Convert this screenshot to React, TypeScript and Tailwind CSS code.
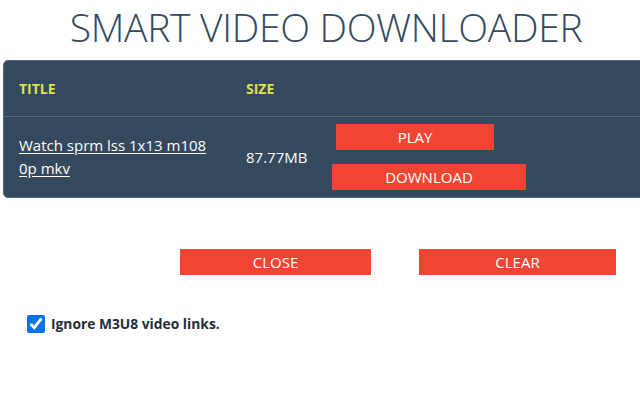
import React from "react";

export default function App() {
  return (
    <div className="w-[640px] h-[400px] bg-white overflow-hidden font-['Open_Sans','Noto_Sans',sans-serif]">
      {/* Header */}
      <h1 className="h-[60px] pl-3 pt-[2px] text-center text-[39px] leading-[50px] font-light tracking-[-0.3px] text-[#34495e]">
        SMART VIDEO DOWNLOADER
      </h1>

      {/* Video table */}
      <div className="ml-[3px] w-[680px] rounded-[5px] border border-[#4b6887] bg-[#34495e]">
        <div className="flex h-[56px] items-center border-b border-[#4b6887] text-[14px] font-bold text-[#dbe24c]">
          <div className="w-[242px] pl-[15px]">TITLE</div>
          <div>SIZE</div>
        </div>
        <div className="flex items-center pt-[7px] pb-[7px] text-white">
          <div className="w-[242px] pl-[15px] text-[15px] leading-[23px]">
            <a href="#" className="underline underline-offset-2">
              Watch sprm lss 1x13 m108
              <br />
              0p mkv
            </a>
          </div>
          <div className="w-[74px] text-[15px]">87.77MB</div>
          <div className="flex flex-col gap-[14px]">
            <button className="ml-[16px] h-[26px] w-[158px] bg-[#f04535] text-[15px] text-white">
              PLAY
            </button>
            <button className="ml-[12px] h-[26px] w-[194px] bg-[#f04535] text-[15px] text-white">
              DOWNLOAD
            </button>
          </div>
        </div>
      </div>

      {/* Actions */}
      <div className="mt-[51px] flex pl-[180px]">
        <button className="h-[26px] w-[191px] bg-[#f04535] text-[15px] text-white">CLOSE</button>
        <button className="ml-[48px] h-[26px] w-[197px] bg-[#f04535] text-[15px] text-white">CLEAR</button>
      </div>

      {/* Options */}
      <label className="mt-[39px] ml-[27px] flex items-center gap-[6px] text-[13.8px] font-bold text-[#1f2d3a]">
        <input type="checkbox" defaultChecked className="h-[18px] w-[18px] accent-[#0b74e8]" />
        Ignore M3U8 video links.
      </label>
    </div>
  );
}
